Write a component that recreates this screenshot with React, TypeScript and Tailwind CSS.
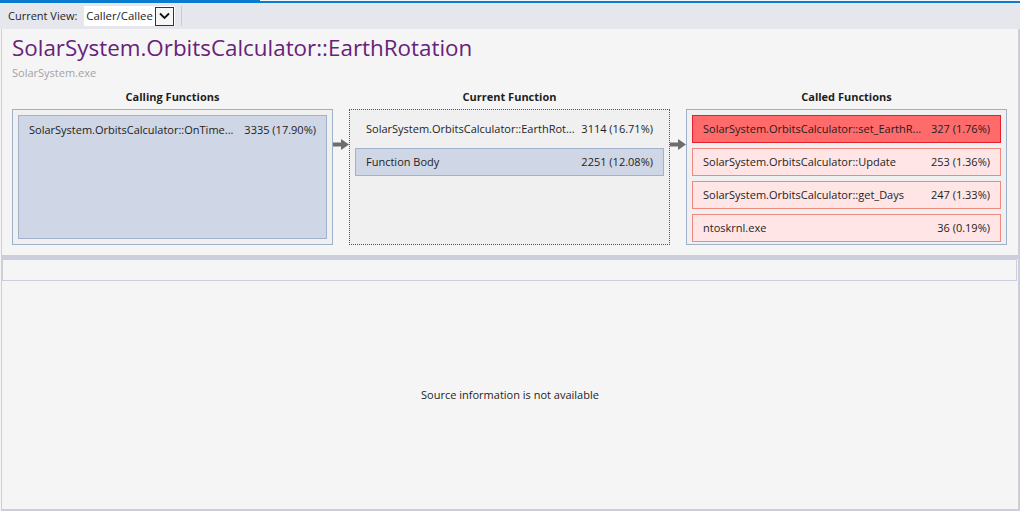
import React from "react";

const font = { fontFamily: '"Open Sans", "Noto Sans", sans-serif' };

function Arrow() {
  return (
    <div className="w-[16px] shrink-0 flex justify-center pt-[50px]">
      <svg width="16" height="11" viewBox="0 0 16 11">
        <rect x="0" y="3.5" width="9" height="4" fill="#6d6d6d" />
        <polygon points="8,0 16,5.5 8,11" fill="#6d6d6d" />
      </svg>
    </div>
  );
}

function Row({
  label,
  value,
  cls,
}: {
  label: string;
  value: string;
  cls: string;
}) {
  return (
    <div className={`h-[28px] shrink-0 flex items-center justify-between px-[10px] pt-[1px] border ${cls}`}>
      <span className="whitespace-nowrap">{label}</span>
      <span className="whitespace-nowrap shrink-0 pl-[3px]">{value}</span>
    </div>
  );
}

export default function App() {
  return (
    <div
      className="w-[1020px] h-[511px] flex flex-col bg-[#f5f5f5] text-[11px] text-[#1e1e1e] overflow-hidden"
      style={font}
    >
      {/* top accent line */}
      <div className="flex h-[3px] shrink-0">
        <div className="w-[260px] bg-[#0a7bd0]" />
        <div className="flex-1 pt-[1px]">
          <div className="h-[2px] bg-[#0a7bd0]" />
        </div>
      </div>
      {/* toolbar */}
      <div className="h-[26px] shrink-0 bg-[#e6e7ed] flex items-center pl-[8px]">
        <span>Current View:</span>
        <div className="ml-[7px] h-[20px] w-[91px] bg-white flex items-center pl-[2px]">
          <span className="flex-1 text-[11.4px]">Caller/Callee</span>
          <div className="h-[19px] w-[19px] mr-[1px] border border-[#333] bg-[#f6f6f6] flex items-center justify-center">
            <svg width="11" height="8" viewBox="0 0 11 8">
              <polyline points="1,1.5 5.5,6 10,1.5" fill="none" stroke="#111" strokeWidth="1.8" />
            </svg>
          </div>
        </div>
        <div className="ml-[6px] w-[1px] h-[20px] bg-[#c9cad3]" />
      </div>
      {/* main frame */}
      <div className="flex-1 flex flex-col ml-[1px] border-l border-r-2 border-b-2 border-[#cccedb]">
        <div className="pl-[10px]">
          <div className="mt-[4px] text-[22.4px] leading-[30px] text-[#68217a]">
            SolarSystem.OrbitsCalculator::EarthRotation
          </div>
          <div className="mt-[2px] leading-[16px] text-[#a3a3a3]">SolarSystem.exe</div>
          <div className="mt-[8px] flex">
            {/* calling */}
            <div className="w-[321px] shrink-0 flex flex-col">
              <div className="h-[16px] leading-[16px] font-bold text-center">Calling Functions</div>
              <div className="mt-[4px] h-[136px] border border-[#9fb0cb] bg-[#f0f0f0] p-[5px] flex flex-col">
                <div className="flex-1 border border-[#a3b2cc] bg-[#cfd6e5]">
                  <div className="h-[28px] flex items-center justify-between px-[10px]">
                    <span className="whitespace-nowrap">SolarSystem.OrbitsCalculator::OnTime...</span>
                    <span className="whitespace-nowrap">3335 (17.90%)</span>
                  </div>
                </div>
              </div>
            </div>
            <Arrow />
            {/* current */}
            <div className="w-[321px] shrink-0 flex flex-col">
              <div className="h-[16px] leading-[16px] font-bold text-center">Current Function</div>
              <div className="mt-[4px] h-[136px] border border-dotted border-[#555] bg-[#f0f0f0] p-[5px] flex flex-col gap-[5px]">
                <Row
                  label="SolarSystem.OrbitsCalculator::EarthRot..."
                  value="3114 (16.71%)"
                  cls="border-transparent"
                />
                <Row label="Function Body" value="2251 (12.08%)" cls="border-[#a3b2cc] bg-[#cfd6e5]" />
              </div>
            </div>
            <Arrow />
            {/* called */}
            <div className="w-[321px] shrink-0 flex flex-col">
              <div className="h-[16px] leading-[16px] font-bold text-center">Called Functions</div>
              <div className="mt-[4px] h-[136px] border border-[#9fb0cb] bg-[#f0f0f0] p-[5px] flex flex-col gap-[5px]">
                <Row
                  label="SolarSystem.OrbitsCalculator::set_EarthR..."
                  value="327 (1.76%)"
                  cls="border-[#e81f2a] bg-[#ff6b6b]"
                />
                <Row
                  label="SolarSystem.OrbitsCalculator::Update"
                  value="253 (1.36%)"
                  cls="border-[#f1877f] bg-[#ffe5e5]"
                />
                <Row
                  label="SolarSystem.OrbitsCalculator::get_Days"
                  value="247 (1.33%)"
                  cls="border-[#f1877f] bg-[#ffe5e5]"
                />
                <Row label="ntoskrnl.exe" value="36 (0.19%)" cls="border-[#f1877f] bg-[#ffe5e5]" />
              </div>
            </div>
          </div>
        </div>
        {/* splitter */}
        <div className="mt-[10px] h-[4px] bg-[#cccedb] shrink-0" />
        <div className="h-[22px] shrink-0 mr-[1px] border border-[#cccedb]" />
        <div className="flex-1 flex items-center justify-center">
          <span>Source information is not available</span>
        </div>
      </div>
    </div>
  );
}
